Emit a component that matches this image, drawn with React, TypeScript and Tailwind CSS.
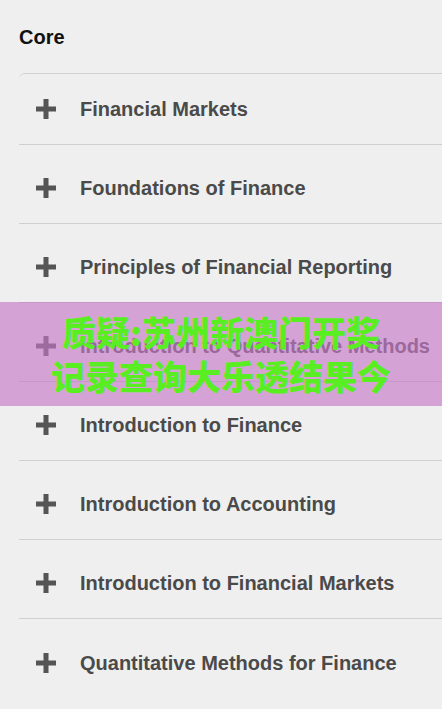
import React from 'react';

const courses = [
  'Financial Markets',
  'Foundations of Finance',
  'Principles of Financial Reporting',
  'Introduction to Quantitative Methods',
  'Introduction to Finance',
  'Introduction to Accounting',
  'Introduction to Financial Markets',
  'Quantitative Methods for Finance',
];

const PlusIcon = () => (
  <svg width="20" height="20" viewBox="0 0 20 20" className="shrink-0">
    <rect x="0" y="7.5" width="20" height="5" fill="#555555" />
    <rect x="7.5" y="0" width="5" height="20" fill="#555555" />
  </svg>
);

export default function App() {
  return (
    <div
      className="relative w-[442px] h-[709px] overflow-hidden bg-[#efefef]"
      style={{ fontFamily: '"Liberation Sans", Arial, sans-serif' }}
    >
      <div className="pl-[19px] pt-[24px] h-[73px]">
        <h2 className="text-[20px] leading-[26px] font-bold text-[#111111]">Core</h2>
      </div>

      {/* Accordion list */}
      <div className="ml-[19px] border-t border-[#cfcfcf] rounded-tl-[6px]">
        {courses.map((c, i) => (
          <div
            key={c}
            className={
              (i === 0 ? 'h-[71px] ' : 'h-[79px] pt-[8px] ') +
              (i === courses.length - 1 ? '' : 'border-b border-[#cfcfcf] ') +
              'flex items-center'
            }
          >
            <div className="pl-[17px] pr-[24px] flex items-center">
              <PlusIcon />
            </div>
            <span className="text-[20px] leading-[24px] font-bold text-[#4a4a4a] whitespace-nowrap">
              {c}
            </span>
          </div>
        ))}
      </div>

      {/* Overlay banner */}
      <div className="absolute left-0 right-0 top-[302px] h-[104px] bg-[#c678c6]/65 flex flex-col items-center justify-center">
        <p
          className="text-[34px] leading-[44px] font-black text-[#58ee22] text-center whitespace-nowrap"
          style={{ fontFamily: '"Noto Sans CJK SC", sans-serif' }}
        >
          质疑:苏州新澳门开奖
          <br />
          记录查询大乐透结果今
        </p>
      </div>
    </div>
  );
}
